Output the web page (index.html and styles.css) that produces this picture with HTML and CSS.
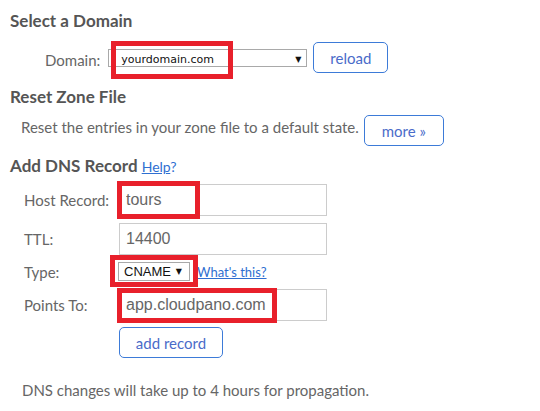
FILE: index.html
```html
<!DOCTYPE html>
<html>
<head>
<meta charset="utf-8">
<link rel="stylesheet" href="styles.css">
</head>
<body>
<div class="page">
  <h2 class="heading h-first">Select a Domain</h2>
  <div class="domain-row">
    <span class="label">Domain:</span>
    <span class="annot">
      <span class="fake-select domain-select"><span class="val">yourdomain.com</span><span class="arrow">▼</span></span>
      <span class="mark mark-domain"></span>
    </span>
    <button class="btn btn-reload">reload</button>
  </div>

  <h2 class="heading h-reset">Reset Zone File</h2>
  <div class="reset-row">
    <span class="reset-text">Reset the entries in your zone file to a default state.</span>
    <button class="btn btn-more">more »</button>
  </div>

  <h2 class="heading h-add">Add DNS Record <a class="help" href="#">Help</a><span class="q">?</span></h2>
  <div class="form">
    <div class="row">
      <span class="flabel">Host Record:</span>
      <span class="annot">
        <input class="text-input" type="text" value="tours">
        <span class="mark mark-host"></span>
      </span>
    </div>
    <div class="row">
      <span class="flabel">TTL:</span>
      <input class="text-input" type="text" value="14400">
    </div>
    <div class="row row-type">
      <span class="flabel">Type:</span>
      <span class="annot">
        <span class="fake-select type-select"><span class="val">CNAME</span><span class="arrow">▼</span></span>
        <span class="mark mark-type"></span>
      </span>
      <a class="whats" href="#">What's this?</a>
    </div>
    <div class="row row-points">
      <span class="flabel">Points To:</span>
      <span class="annot">
        <input class="text-input" type="text" value="app.cloudpano.com">
        <span class="mark mark-points"></span>
      </span>
    </div>
    <div class="row row-btn">
      <span class="flabel"></span>
      <button class="btn btn-add">add record</button>
    </div>
  </div>

  <p class="note">DNS changes will take up to 4 hours for propagation.</p>
</div>
</body>
</html>
```

FILE: styles.css
```css
* { box-sizing: border-box; }
html, body { margin: 0; padding: 0; background: #fff; }
body {
  font-family: "Lato", "Open Sans", sans-serif;
  font-size: 15px;
  color: #666;
}
.page { padding: 0 10px; width: 540px; }

.heading {
  margin: 0;
  font-size: 17px;
  line-height: 18px;
  font-weight: 700;
  color: #555;
}
.h-first { padding-top: 12px; }
.h-reset { margin-top: 15px; }
.h-add { margin-top: 11px; }

.domain-row {
  display: flex;
  align-items: center;
  margin-top: 12px;
  padding-left: 35px;
  height: 31px;
}
.label { margin-right: 8px; line-height: 18px; padding-top: 4px; }

.annot { position: relative; display: inline-block; }
.mark {
  position: absolute;
  border: 5px solid #e8202b;
  pointer-events: none;
}

.fake-select {
  display: flex;
  align-items: center;
  justify-content: space-between;
  border: 1px solid #a9a9a9;
  background: #fff;
  color: #111;
}
.fake-select .arrow { font-size: 8px; color: #111; font-family: "DejaVu Sans", sans-serif; }
.domain-select {
  width: 199px;
  height: 18px;
  padding: 0 5px 0 12px;
  font-family: "DejaVu Sans", sans-serif;
  font-size: 11px;
  padding-top: 4px;
}
.mark-domain { left: 3px; top: -8px; width: 122px; height: 38px; }

.btn {
  font-family: "Lato", "Open Sans", sans-serif;
  font-size: 15px;
  color: #4a6bc9;
  background: #fff;
  border: 1px solid #3d7bd8;
  border-radius: 5px;
  padding: 0;
  height: 31px;
}
.btn-reload { margin-left: 6px; width: 75px; }

.reset-row {
  display: flex;
  align-items: flex-start;
  margin-top: 9px;
  padding-left: 11px;
}
.reset-text { margin-top: 3px; line-height: 18px; }
.btn-more { margin-left: 5px; width: 80px; height: 31px; }

.help {
  font-weight: 400;
  font-size: 14px;
  color: #2f6fd1;
  text-decoration: underline;
}
.q { font-weight: 400; font-size: 14px; color: #2f6fd1; }

.form { margin-top: 8px; padding-left: 14px; }
.row { display: flex; align-items: center; margin-bottom: 7px; }
.flabel { width: 95px; flex: none; line-height: 18px; }
.text-input {
  display: block;
  width: 208px;
  height: 32px;
  border: 1px solid #ccc;
  padding: 0 0 0 6px;
  margin: 0;
  font-family: "Liberation Sans", Arial, sans-serif;
  font-size: 16px;
  color: #666;
  background: #fff;
  outline: none;
}
.mark-host { left: -2px; top: -3px; width: 83px; height: 38px; }

.row-type { margin-bottom: 8px; }
.type-select {
  width: 72px;
  height: 19px;
  margin-left: -1px;
  padding: 0 7px 0 5px;
  font-family: "Liberation Sans", Arial, sans-serif;
  font-size: 13px;
  color: #111;
}
.mark-type { left: -9px; top: -7px; width: 88px; height: 32px; }
.whats {
  margin-left: 7px;
  font-size: 13px;
  color: #2f6fd1;
  text-decoration: underline;
}
.mark-points { left: -2px; top: -1px; width: 160px; height: 35px; }

.row-points { margin-bottom: 6px; }
.btn-add { width: 104px; height: 31px; }

.note {
  margin: 23px 0 0 0;
  padding-left: 12px;
  line-height: 18px;
  font-size: 15px;
  color: #666;
}
```
